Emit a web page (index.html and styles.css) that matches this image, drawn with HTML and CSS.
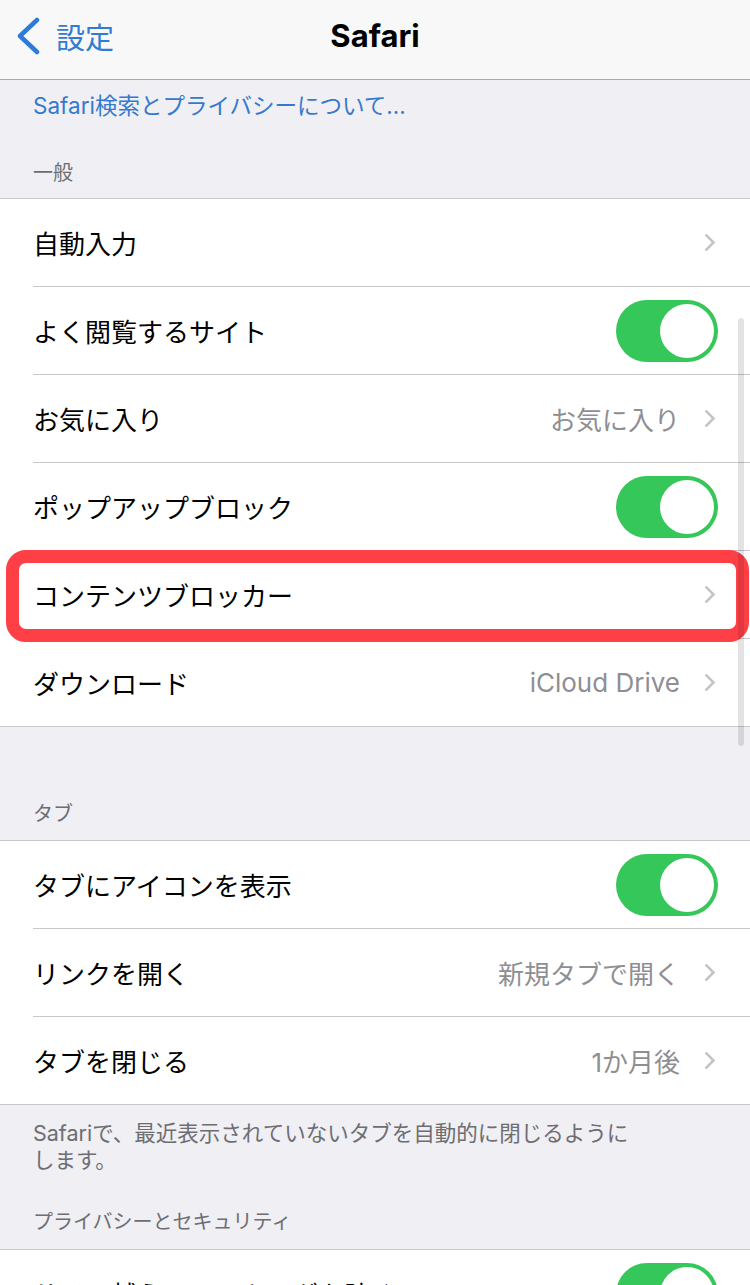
FILE: index.html
```html
<!DOCTYPE html>
<html lang="ja">
<head>
  <meta charset="UTF-8">
  <title>Safari</title>
  <meta name="viewport" content="width=device-width, initial-scale=1">
  <link rel="stylesheet" href="styles.css">
</head>
<body>
  <header class="navbar">
    <a class="back" href="#">
      <svg class="back-icon" viewBox="0 0 24 38" width="24" height="38">
        <path d="M21 3 L4 19 L21 35" fill="none" stroke="currentColor" stroke-width="4.5" stroke-linecap="round" stroke-linejoin="round"/>
      </svg>
      <span>設定</span>
    </a>
    <h1 class="title">Safari</h1>
    <div></div>
  </header>

  <a class="info-link" href="#">Safari検索とプライバシーについて...</a>

  <h2 class="section-header first">一般</h2>
  <div class="group">
    <div class="row"><div class="row-body"><span class="label">自動入力</span><span class="chevron"></span></div></div>
    <div class="row"><div class="row-body"><span class="label">よく閲覧するサイト</span><span class="toggle"></span></div></div>
    <div class="row"><div class="row-body"><span class="label">お気に入り</span><span class="value">お気に入り</span><span class="chevron"></span></div></div>
    <div class="row"><div class="row-body"><span class="label">ポップアップブロック</span><span class="toggle"></span></div></div>
    <div class="row highlighted">
      <div class="row-body"><span class="label">コンテンツブロッカー</span><span class="chevron"></span></div>
      <div class="highlight-box"></div>
    </div>
    <div class="row"><div class="row-body"><span class="label">ダウンロード</span><span class="value">iCloud Drive</span><span class="chevron"></span></div></div>
  </div>

  <h2 class="section-header">タブ</h2>
  <div class="group">
    <div class="row"><div class="row-body"><span class="label">タブにアイコンを表示</span><span class="toggle"></span></div></div>
    <div class="row"><div class="row-body"><span class="label">リンクを開く</span><span class="value">新規タブで開く</span><span class="chevron"></span></div></div>
    <div class="row"><div class="row-body"><span class="label">タブを閉じる</span><span class="value">1か月後</span><span class="chevron"></span></div></div>
  </div>
  <p class="section-footer">Safariで、最近表示されていないタブを自動的に閉じるように<br>します。</p>

  <h2 class="section-header after-footer">プライバシーとセキュリティ</h2>
  <div class="group">
    <div class="row"><div class="row-body"><span class="label">サイト越えトラッキングを防ぐ</span><span class="toggle"></span></div></div>
  </div>

  <div class="scrollbar"></div>
</body>
</html>
```

FILE: styles.css
```css
html, body {
  margin: 0;
  padding: 0;
}

body {
  font-family: 'Inter', 'Noto Sans CJK JP', sans-serif;
  background-color: #efeff4;
  color: #000;
  width: 750px;
  height: 1285px;
  overflow: hidden;
}

.navbar {
  height: 79px;
  border-bottom: 1px solid #aaaaad;
  background-color: #f8f8f8;
  display: grid;
  grid-template-columns: 1fr auto 1fr;
  align-items: center;
}

.back {
  display: flex;
  align-items: center;
  gap: 16px;
  padding-left: 16px;
  color: #2f7bd5;
  text-decoration: none;
  font-size: 29px;
  margin-top: -8px;
}

.back-icon {
  display: block;
}

.title {
  margin: -9px 0 0;
  font-size: 31px;
  font-weight: 700;
}

.info-link {
  display: block;
  padding: 12px 33px 0;
  line-height: 28px;
  font-size: 22.5px;
  color: #3479cf;
  text-decoration: none;
}

.section-header {
  margin: 0;
  padding: 73px 33px 12px;
  line-height: 28px;
  font-size: 20px;
  font-weight: 400;
  color: #6d6d72;
}

.section-header.first {
  padding-top: 39px;
  padding-bottom: 11px;
}

.section-header.after-footer {
  padding-top: 34px;
  padding-bottom: 13px;
}

.group {
  background-color: #fff;
  border-top: 1px solid #c8c7cc;
  border-bottom: 1px solid #c8c7cc;
}

.row {
  position: relative;
  padding-left: 33px;
}

.row-body {
  height: 88px;
  box-sizing: border-box;
  border-bottom: 1px solid #c8c7cc;
  display: flex;
  align-items: center;
  padding-right: 32px;
}

.row:last-child .row-body {
  height: 87px;
  border-bottom: none;
}

.label {
  flex: 1;
  font-size: 26px;
}

.value {
  font-size: 26px;
  color: #8e8e93;
  margin-right: 24px;
}

.chevron {
  width: 11px;
  height: 17px;
  margin-right: 3px;
  position: relative;
}

.chevron::before {
  content: "";
  position: absolute;
  width: 10px;
  height: 10px;
  border-top: 3px solid #c4c4c8;
  border-right: 3px solid #c4c4c8;
  border-radius: 1px;
  transform: rotate(45deg);
  top: 2px;
  left: -4px;
}

.toggle {
  width: 102px;
  height: 62px;
  border-radius: 31px;
  background-color: #35c759;
  position: relative;
}

.toggle::after {
  content: "";
  position: absolute;
  top: 4px;
  right: 4px;
  width: 54px;
  height: 54px;
  border-radius: 50%;
  background-color: #fff;
}

.highlight-box {
  position: absolute;
  top: -1px;
  left: 6px;
  right: 1px;
  height: 92px;
  box-sizing: border-box;
  border: 13px solid #fe4046;
  border-radius: 20px;
}

.section-footer {
  margin: 0;
  padding: 15px 33px 0;
  font-size: 21.5px;
  line-height: 27px;
  color: #6d6d72;
}

.scrollbar {
  position: fixed;
  top: 318px;
  right: 6px;
  width: 6px;
  height: 428px;
  border-radius: 3px;
  background-color: rgba(0, 0, 0, 0.11);
}
```
